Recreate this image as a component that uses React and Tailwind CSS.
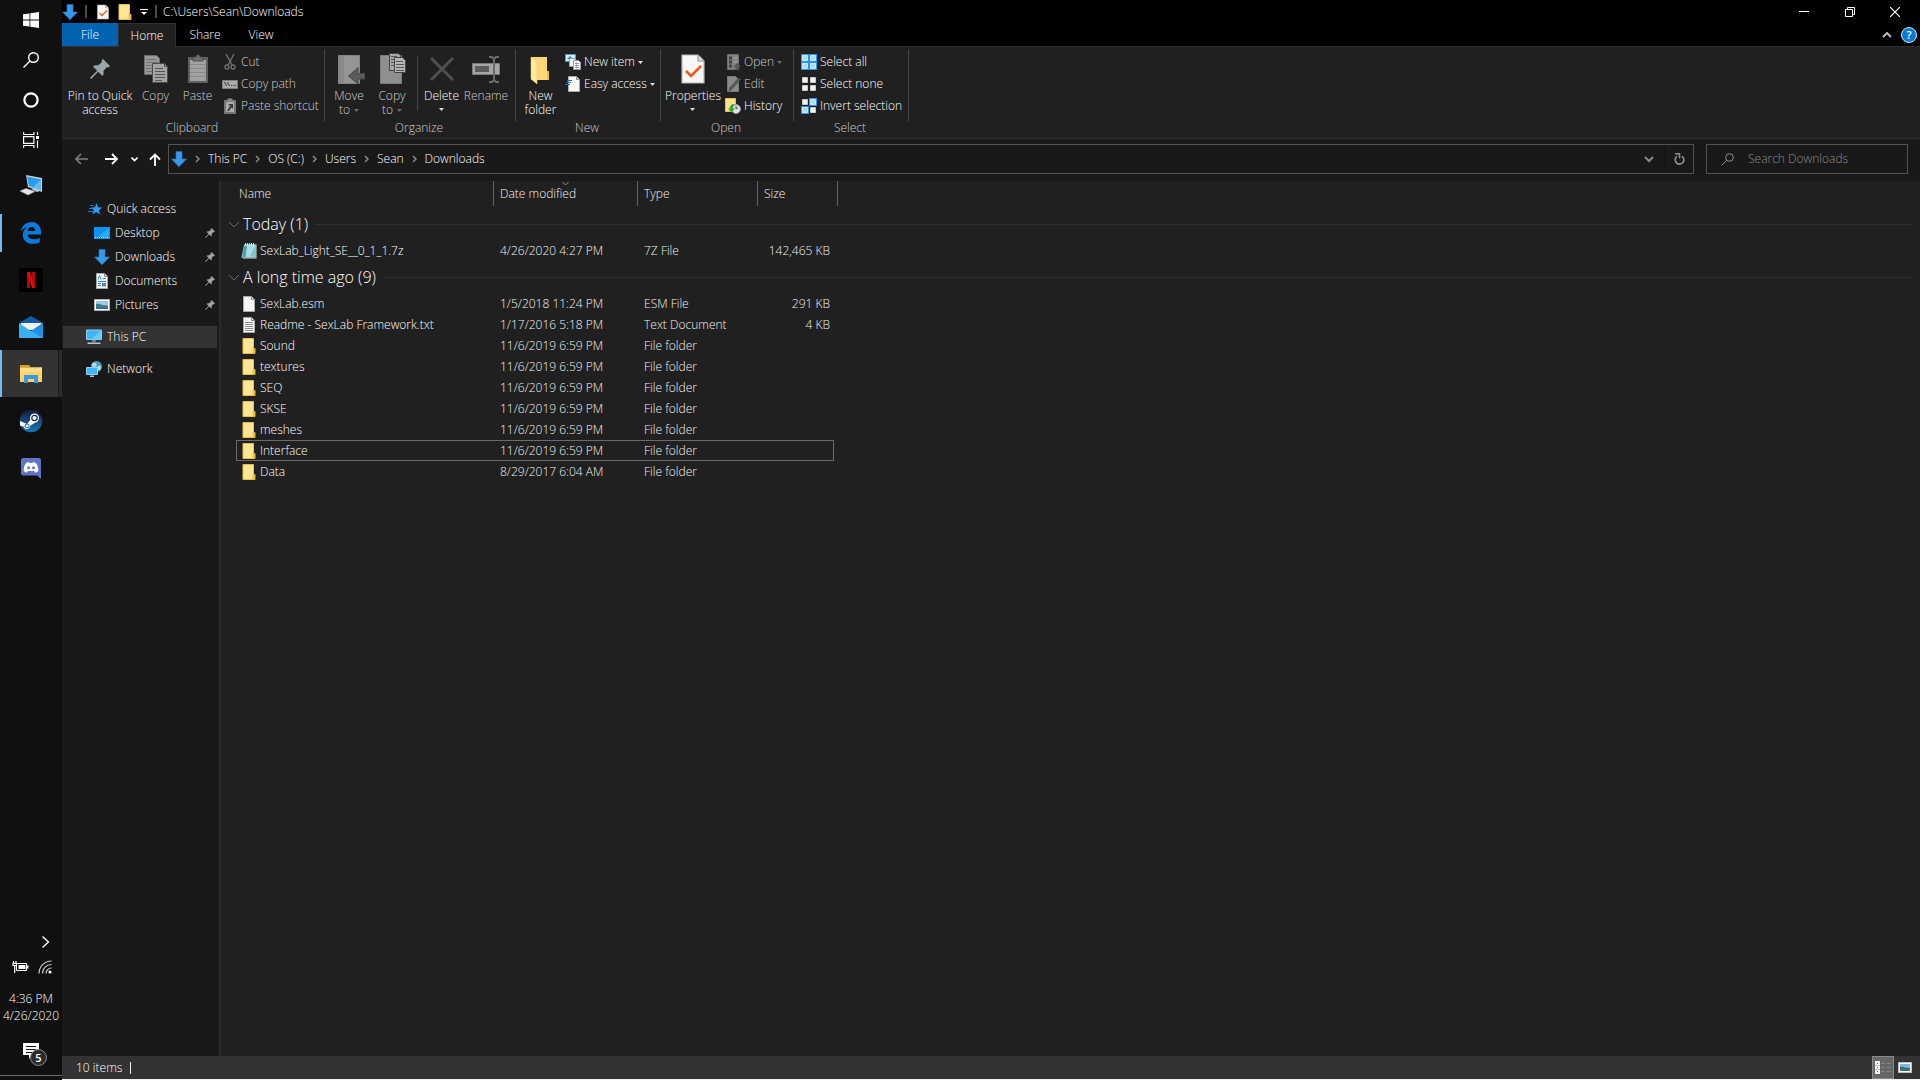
import React from 'react';

const GRAY = '#8f8f8f';

/* ---------- shared icons ---------- */

const Svg = ({ w = 16, h = 16, box, className = '', children }) => (
  <svg width={w} height={h} viewBox={box || `0 0 ${w} ${h}`} className={`shrink-0 ${className}`} fill="none" aria-hidden="true">
    {children}
  </svg>
);

const DownArrowIcon = () => (
  <Svg>
    <path d="M5 0.5h6v7.5h4.5L8 15.8 0.5 8H5z" fill="#3797e8" stroke="#2179c4" strokeWidth="0.6" />
  </Svg>
);

const SmallFolderIcon = () => (
  <Svg>
    <path d="M2 0.5h10.5v10h1.5v5H2z" fill="#ffe594" stroke="#e9bf3e" />
    <path d="M12 10.5h1.5v4.5h-1.5z" fill="#f5cf5c" stroke="#dba81f" strokeWidth="0.6" />
  </Svg>
);

const PropertiesIcon = ({ w = 16, h = 16 }) => (
  <Svg w={w} h={h} box="0 0 32 32">
    <path d="M5 2h16l6 6v22H5z" fill="#f7f7f7" stroke="#b5b5b5" strokeWidth="1.2" />
    <path d="M21 2v6h6" fill="#dcdcdc" stroke="#8f8f8f" />
    <path d="M9 18l5 5 10-10" stroke="#f1581c" strokeWidth="2.6" />
  </Svg>
);

const PushPin = ({ w = 12, h = 12, color = '#9aa4ab' }) => (
  <Svg w={w} h={h} box="0 0 20 20">
    <path d="M13 0l7 7-1.6 1.4-1.4-.4-3.6 4c.5 2 .2 3.600-1 5l-4.200-4.200L1.200 20 0 18.800l7.200-7L3 7.600c1.400-1.200 3-1.500 5-1l4-3.600-.4-1.400z" fill={color} />
  </Svg>
);

const PageIcon = ({ lines }) => (
  <Svg>
    <path d="M2.500 0.500h8l3 3v12h-11z" fill="#f5f5f5" stroke="#a8a8a8" />
    <path d="M10.500 0.500v3h3" fill="#ccc" stroke="#8b8b8b" />
    {lines && <path d="M4 5.500h8M4 7.500h8M4 9.500h8M4 11.500h8M4 13.500h8" stroke="#8c8c8c" />}
  </Svg>
);

const NotepadIcon = () => (
  <Svg>
    <path d="M3 1.500h12.500v14H2z" fill="#e2d5ae" />
    <path d="M3.500 1.500h11.500l-.5 13H.6z" fill="#a5dbe4" stroke="#5d9eab" strokeWidth="0.600" />
    <path d="M6 3l-1.500 11H1.500L3.500 3z" fill="#4d9bab" />
    <path d="M14 3l-.5 10.500H9z" fill="#7cc3d0" />
    <path d="M4.500 0v3M6.500 0v3M8.500 0v3M10.500 0v3M12.500 0v3" stroke="#d8e4e6" />
  </Svg>
);

const MonitorIcon = () => (
  <Svg>
    <path d="M.5 1h15v9.500H.5z" fill="#3fb5f7" stroke="#83d1fb" />
    <path d="M15 1.500V10H5z" fill="#67c8fd" />
    <path d="M6 11.500h4v1H6zM1.500 13.500h13v1.500h-13z" fill="#b9c6ce" />
  </Svg>
);

const Caret = ({ color = '#dedede' }) => (
  <Svg w={5} h={3}>
    <path d="M0 0h5L2.500 3z" fill={color} />
  </Svg>
);

const CrumbChevron = () => (
  <Svg w={5} h={8}>
    <path d="M1 1l3 3-3 3" stroke="#8a8a8a" strokeWidth="1.500" />
  </Svg>
);

/* ---------- ribbon icons ---------- */

const CopyIcon = () => (
  <Svg w={32} h={32}>
    <path d="M4.500 2.500h12l3 3v16h-15z" fill="#989898" stroke="#6c6c6c" />
    <path d="M6 6.500h10M6 9.500h12M6 12.500h12M6 15.500h12M6 18.500h12" stroke="#707070" />
    <path d="M12.500 10.500h12l3 3v16h-15z" fill="#a3a3a3" stroke="#4a4a4a" />
    <path d="M24.500 10.500v3h3" stroke="#4a4a4a" />
    <path d="M15 15.500h8M15 18.500h10M15 21.500h10M15 24.500h10M15 27.500h7" stroke="#555" />
  </Svg>
);

const PasteIcon = () => (
  <Svg w={32} h={32}>
    <path d="M6 4h20v26H6z" fill="#5e5e5e" />
    <path d="M8 7h16v21H8z" fill="#a2a2a2" />
    <path d="M8 11.500h16M8 15.500h16M8 19.500h16M8 23.500h16" stroke="#8b8b8b" />
    <path d="M11 4h3c0-3 4-3 4 0h3v4H11z" fill="#6f6f6f" stroke="#444" strokeWidth="0.800" />
  </Svg>
);

const MoveToIcon = () => (
  <Svg w={32} h={32}>
    <path d="M5.500 2.500h21v28h-21z" fill="#959595" stroke="#848484" />
    <path d="M6 3h5v27H6z" fill="#8a8a8a" />
    <path d="M32 20.500h-7v-6L15.500 23l9.500 8v-5h7z" fill="#5b5b5b" stroke="#484848" />
  </Svg>
);

const CopyToIcon = () => (
  <Svg w={32} h={32}>
    <path d="M4.500 2.500h21v28h-21z" fill="#8f8f8f" stroke="#7d7d7d" />
    <path d="M13.500.5h9l2 2v15h-11z" fill="#a8a8a8" stroke="#444" />
    <path d="M18.500 4.500h8l3 3v12h-11z" fill="#b5b5b5" stroke="#444" />
    <path d="M15 3.500h6M15 6.500h3M15 9.500h3M15 12.500h3M20 8.500h7M20 11.500h8M20 14.500h8M20 17.500h8" stroke="#555" />
  </Svg>
);

const DeleteIcon = () => (
  <Svg w={32} h={32}>
    <path d="M5 5l22 22M27 5L5 27" stroke="#505050" strokeWidth="3" />
  </Svg>
);

const RenameIcon = () => (
  <Svg w={32} h={32}>
    <path d="M2.500 10.500h27v11h-27z" fill="#a6a6a6" stroke="#7a7a7a" />
    <path d="M5 13h14v6H5z" fill="#5c5c5c" />
    <path d="M19 4h3l2 2 2-2h3M24 5.500v22M19 29h3l2-2 2 2h3" stroke="#6b6b6b" strokeWidth="2" />
  </Svg>
);

const NewFolderIcon = () => (
  <Svg w={32} h={32}>
    <path d="M6 4h16v14h2v9H6z" fill="#fbd775" />
    <path d="M6 4l6 4v23l-6-5z" fill="#ffe9a3" stroke="#eec65c" strokeWidth="0.600" />
    <path d="M22 18h2v9h-2z" fill="#eebe4a" />
  </Svg>
);

const CutIcon = () => (
  <Svg>
    <path d="M4 0l6 11M12 0L6 11" stroke="#6f6f6f" strokeWidth="1.400" />
    <circle cx="5" cy="13" r="2" stroke="#6f6f6f" strokeWidth="1.300" />
    <circle cx="11" cy="13" r="2" stroke="#6f6f6f" strokeWidth="1.300" />
  </Svg>
);

const CopyPathIcon = () => (
  <Svg>
    <path d="M.5 4.500h15v8H.5z" fill="#aaa" stroke="#7d7d7d" />
    <path d="M2.500 6l2 4M5.500 6l2 4M9 9.500h1.200M11 9.500h1.200M13 9.500h1.200" stroke="#3c3c3c" />
  </Svg>
);

const PasteShortcutIcon = () => (
  <Svg>
    <path d="M2 2h12v14H2z" fill="#767676" />
    <path d="M4 4h8v10H4z" fill="#ababab" />
    <path d="M5.500.5h5v3h-5z" fill="#8b8b8b" />
    <path d="M6 6h5v5L9.500 9.500 7 13H5l3-5z" fill="#3d3d3d" />
  </Svg>
);

const NewItemIcon = () => (
  <Svg>
    <path d="M.5.5h10v7H.5z" fill="#d5ecfb" stroke="#3f9fe0" />
    <path d="M2 5l3-3 3 3z" fill="#3a7fb0" />
    <path d="M4.500 4.500h6v8h-6z" fill="#f3f3f3" stroke="#9b9b9b" />
    <path d="M8.500 6.500h5l2 2v7h-7z" fill="#fff" stroke="#9b9b9b" />
    <path d="M10 9.500h4M10 11.500h4M10 13.500h4" stroke="#6f9fd0" />
    <path d="M11.500 8v7" stroke="#d98080" strokeWidth="0.600" />
  </Svg>
);

const EasyAccessIcon = () => (
  <Svg>
    <path d="M3.500.5h8l3 3v12h-11z" fill="#f7f7f7" stroke="#a9a9a9" />
    <path d="M11.500.5v3h3" fill="#ccc" stroke="#8b8b8b" />
    <path d="M2 4.500h5M1 6.500h5M0 8.500h5" stroke="#1d6fb8" strokeWidth="1.200" />
  </Svg>
);

const OpenIcon = () => (
  <Svg>
    <path d="M2.500.5h11v15h-11z" fill="#828282" stroke="#6c6c6c" />
    <path d="M4 2.500h3v3H4zM4 6.500h3v3H4zM4 10.500h3v3H4z" fill="#3f3f3f" />
    <path d="M8.500 4h4M8.500 8h4" stroke="#b0b0b0" />
    <path d="M12 9l4 4h-2.500v3h-3v-3H8z" fill="#555" />
  </Svg>
);

const EditIcon = () => (
  <Svg>
    <path d="M2.500.5h8l3 3v12h-11z" fill="#8b8b8b" stroke="#777" />
    <path d="M15.500 3.500L7 13l-3 2 1-3.500L13.500 2z" fill="#5d5d5d" stroke="#3f3f3f" strokeWidth="0.600" />
  </Svg>
);

const HistoryIcon = () => (
  <Svg>
    <path d="M.5.5h10v13H.5z" fill="#fbe08a" stroke="#e8c14a" />
    <circle cx="11" cy="11" r="4.500" fill="#dfe3e6" stroke="#8e979e" />
    <path d="M11 8v3l2-1.500" stroke="#555" />
    <path d="M8.500 6C5 6.500 5 9.500 5 10.500H3l3.500 4L10 10.500H8c0-1.500 0-2.500 1.500-3z" fill="#35a63c" />
  </Svg>
);

const Tile = ({ x, y, on }) => (
  <>
    {on && <path d={`M${x - 1} ${y - 1}h8v8h-8z`} fill="#2f93e6" />}
    <path d={`M${x + 0.5} ${y + 0.5}h5v5h-5z`} fill={on ? '#a8dcff' : '#f2f2f2'} stroke={on ? '#cbeaff' : '#c9c9c9'} />
  </>
);

const TilesIcon = ({ selected }) => (
  <Svg>
    <Tile x={1} y={1} on={selected[0]} />
    <Tile x={9} y={1} on={selected[1]} />
    <Tile x={1} y={9} on={selected[2]} />
    <Tile x={9} y={9} on={selected[3]} />
  </Svg>
);

/* ---------- navigation icons ---------- */

const StarIcon = () => (
  <Svg>
    <path d="M9.500 2l1.500 4.200 4.300.2-3.400 2.700 1.200 4.500-3.800-2.500-3.800 2.500 1.400-4.500L3.800 6.400l4.100-.2z" fill="#2a9df4" />
    <path d="M3 4.500h4M2 7.500h4M1 10.500h5" stroke="#1b76c4" />
  </Svg>
);

const DesktopIcon = () => (
  <Svg>
    <path d="M0 2h16v12H0z" fill="#0c93f5" />
    <path d="M15 3v9H4z" fill="#2ea7ff" />
    <path d="M1 12.500h14" stroke="#cbe8ff" strokeDasharray="1 1" />
  </Svg>
);

const DocumentsIcon = () => (
  <Svg>
    <path d="M2.500.5h8l3 3v12h-11z" fill="#f7f7f7" stroke="#a8a8a8" />
    <path d="M10.500.5v3h3" stroke="#8b8b8b" />
    <path d="M4 6.500l1.500-4 1.500 4M9 5.500h3M4 8.500h8M4 10.500h3M4 12.500h3" stroke="#2b8ad6" />
    <path d="M8 10h4v3.500H8z" fill="#5d87a8" />
  </Svg>
);

const PicturesIcon = () => (
  <Svg>
    <path d="M.5 2.500h15v11H.5z" fill="#fff" stroke="#b5b5b5" />
    <path d="M2 4h12v8H2z" fill="#9cc7ee" />
    <path d="M2 7c4-1 6 2 12 1.500V12H2z" fill="#3f7d7b" />
    <path d="M2 10.500h12V12H2z" fill="#2f6fb0" />
  </Svg>
);

const NetworkIcon = () => (
  <Svg>
    <circle cx="10.500" cy="5.500" r="5.500" fill="#4a9cc4" />
    <path d="M8 1.500c2 0 3 1 2.500 3S7 6 6 5s0-3 2-3.500zM12 5c2-.5 3 .5 3 2s-2 3-3 2-1-3.500 0-4z" fill="#b6dcd9" />
    <path d="M.5 6.500h11v7H.5z" fill="#3fb5f7" stroke="#8bd3fb" />
    <path d="M4 14.500h4v1.500H4z" fill="#b9c6ce" />
  </Svg>
);

/* ---------- taskbar ---------- */

const SYSTEM_ITEMS = [
  {
    label: 'Start',
    icon: (
      <Svg>
        <path d="M0 2.300l6.500-.9v6.100H0zM7.300 1.200L16 0v7.500H7.300zM0 8.400h6.500v6.200L0 13.700zM7.300 8.400H16V16l-8.700-1.200z" fill="#fff" />
      </Svg>
    ),
  },
  {
    label: 'Search',
    icon: (
      <Svg>
        <circle cx="10.500" cy="5.500" r="4.800" stroke="#fff" strokeWidth="1.400" />
        <path d="M7 9L.5 15.500" stroke="#fff" strokeWidth="1.400" />
      </Svg>
    ),
  },
  {
    label: 'Cortana',
    icon: (
      <Svg>
        <circle cx="8" cy="8" r="6.600" stroke="#fff" strokeWidth="2.200" />
      </Svg>
    ),
  },
  {
    label: 'Task View',
    icon: (
      <Svg>
        <path d="M.6 0v2.500h10.300V0M.6 4.600h10.300v6.800H.6zM.6 16v-2.500h10.300V16M14.500 0v3M14.500 8.500V16" stroke="#fff" strokeWidth="1.200" />
        <path d="M13 4h3v3h-3z" fill="#fff" />
      </Svg>
    ),
  },
];

const APP_ITEMS = [
  {
    label: 'This PC',
    icon: (
      <Svg w={24} h={24}>
        <path d="M7 1l16 3v14L9 13z" fill="#c6d4dc" />
        <path d="M8 2.500l14 2.700v11L10 12z" fill="#2a9de8" />
        <path d="M22 5.200v11L14 13.500z" fill="#57bdf8" />
        <path d="M1 17l6-2.500 9 3L9 21z" fill="#dfe5e9" stroke="#9aa7af" strokeWidth="0.600" />
        <path d="M12 15l4-1 6 2.500-4 1.500z" fill="#b9c4cb" />
      </Svg>
    ),
  },
  {
    label: 'Microsoft Edge',
    running: true,
    icon: (
      <Svg w={24} h={24}>
        <path d="M2 10.500C3 4.500 7 1 12.500 1 18.500 1 22 5.500 22 11v2.600H8.600c.2 3.200 2.900 4.700 6.200 4.700 2.300 0 4.200-.6 5.900-1.600v4.600c-2 1-4.300 1.500-7 1.500-6 0-9.900-3.600-9.900-8.800 0-3.300 1.700-6.300 5-7.900-3 .6-5.200 2.200-6.800 4.400zM8.700 10h7.500c0-2.600-1.300-3.900-3.500-3.900-2.200 0-3.700 1.600-4 3.900z" fill="#0a7bdc" />
      </Svg>
    ),
  },
  {
    label: 'Netflix',
    icon: (
      <Svg w={24} h={24}>
        <path d="M0 0h24v24H0z" fill="#000" />
        <path d="M8 4h3v16H8zM13 4h3v16h-3z" fill="#b20710" />
        <path d="M8 4h3l5 16h-3z" fill="#e50914" />
      </Svg>
    ),
  },
  {
    label: 'Mail',
    icon: (
      <Svg w={24} h={24}>
        <path d="M0 8l12-7 12 7v4H0z" fill="#0f5cab" />
        <path d="M2 8h20v7H2z" fill="#f2f6fa" />
        <path d="M0 8l12 8 12-8v15H0z" fill="#38b2ef" />
        <path d="M12 16l12-8v15z" fill="#1f8fe0" />
      </Svg>
    ),
  },
  {
    label: 'File Explorer',
    running: true,
    active: true,
    icon: (
      <Svg w={24} h={24}>
        <path d="M1 3h9l1.500 2H1z" fill="#e59e12" />
        <path d="M1 5.500h22V20H1z" fill="#ffd364" />
        <path d="M1 5.500h22v5H1z" fill="#ffdd83" />
        <path d="M5 13h14v8h-4v-4H9v4H5z" fill="#3b97e3" />
      </Svg>
    ),
  },
  {
    label: 'Steam',
    icon: (
      <Svg w={24} h={24}>
        <defs>
          <linearGradient id="steam" x1="0" y1="0" x2="0" y2="1">
            <stop offset="0" stopColor="#16193a" />
            <stop offset="1" stopColor="#1479b8" />
          </linearGradient>
        </defs>
        <circle cx="12" cy="12" r="11.300" fill="url(#steam)" />
        <path d="M1 12l7 3 5-6 4 4-6 4c0 4-6 4-6 1l-4-1.500z" fill="#fff" />
        <circle cx="15.500" cy="9" r="4.500" fill="#fff" />
        <circle cx="15.500" cy="9" r="2.700" stroke="#1a2a50" strokeWidth="1.200" />
        <circle cx="8" cy="17" r="2" stroke="#1a5a90" />
      </Svg>
    ),
  },
  {
    label: 'Discord',
    icon: (
      <Svg w={24} h={24}>
        <path d="M4 2h16c1 0 2 1 2 2v19l-4-3.500H4c-1 0-2-1-2-2V4c0-1 1-2 2-2z" fill="#6373c3" />
        <path d="M6.500 7.500c2-1.500 3-1.500 3.500-1.500l.5 1h3l.5-1c.5 0 1.500 0 3.500 1.500 1.300 2.500 2 5 1.800 7.500-1.300 1.200-2.500 1.500-3.300 1.500l-1-1.500h-6l-1 1.500c-.8 0-2-.3-3.300-1.500-.2-2.500.5-5 1.800-7.500z" fill="#fff" />
        <circle cx="9.500" cy="11.800" r="1.500" fill="#6373c3" />
        <circle cx="14.500" cy="11.800" r="1.500" fill="#6373c3" />
      </Svg>
    ),
  },
];

const appItemClass = (item) => {
  if (item.active) return 'border-l-2 border-[#76b9ed] bg-[#333333] pr-[2px]';
  return 'pr-0';
};

const Taskbar = () => (
  <aside className="flex w-[62px] shrink-0 flex-col bg-[#101010] text-white">
    {SYSTEM_ITEMS.map((item) => (
      <button key={item.label} aria-label={item.label} className="flex h-10 items-center justify-center">
        {item.icon}
      </button>
    ))}
    <div className="mt-[2px] flex flex-col">
      {APP_ITEMS.map((item) => (
        <button
          key={item.label}
          aria-label={item.label}
          className={`relative flex h-[47px] items-center justify-center ${appItemClass(item)}`}
        >
          {item.running && !item.active && <span className="absolute left-0 h-[38px] w-[2px] bg-[#76b9ed]" />}
          {item.icon}
          {item.active && <span className="absolute inset-y-0 right-0 w-1 border-l border-[#1b1b1b] bg-[#2b2b2b]" />}
        </button>
      ))}
    </div>

    <div className="mt-auto flex flex-col border-b border-[#6b6b6b]">
      <button aria-label="Show hidden icons" className="flex h-6 items-center justify-end pr-3">
        <Svg w={9} h={14}>
          <path d="M1.500 1.500L7.500 7l-6 5.500" stroke="#fff" strokeWidth="1.300" />
        </Svg>
      </button>
      <div className="flex h-[26px] items-center justify-between pr-[10px] pl-3">
        <Svg w={17} h={14}>
          <path d="M4.500 3.500h10v7h-10z" stroke="#fff" />
          <path d="M6.500 5h7v4h-7zM15 5.500h1.500v3H15z" fill="#fff" />
          <path d="M1.500 1v2M4 1v2M1 3.500h3.500v2H1zM2.700 6v7" stroke="#fff" strokeWidth="1.200" />
        </Svg>
        <Svg w={14} h={14}>
          <path d="M1 13.500A12.500 12.500 0 0 1 13.500 1M4.500 13.500a9 9 0 0 1 9-9M8 13.500a5.500 5.500 0 0 1 5.500-5.500" stroke="#d0d0d0" strokeWidth="1.200" />
          <circle cx="12" cy="12" r="1.600" fill="#fff" />
        </Svg>
      </div>
      <time className="mt-[10px] text-center text-[12px] leading-[17px]">
        4:36 PM
        <br />
        4/26/2020
      </time>
      <button aria-label="Notifications" className="relative mt-[19px] flex h-[32px] items-start pl-[23px]">
        <Svg w={16} h={16}>
          <path d="M0 0h16v12H9l-3 4v-4H0z" fill="#fff" />
          <path d="M3 3.500h10M3 6.500h10M3 9.500h7" stroke="#101010" />
        </Svg>
        <span className="absolute top-[6px] left-[30px] flex h-[17px] w-[17px] items-center justify-center rounded-full border border-[#8a8a8a] bg-[#2b2b2b] text-[11px] leading-none font-semibold">
          5
        </span>
      </button>
    </div>
    <div className="h-1" />
  </aside>
);

/* ---------- window chrome ---------- */

const TitleBar = () => (
  <header className="flex h-[23px] items-center bg-black">
    <div className="flex items-center">
      <DownArrowIcon />
      <span className="ml-[7px] h-[13px] w-[2px] bg-[#4a4a4a]" />
      <button aria-label="Properties" className="ml-2">
        <PropertiesIcon />
      </button>
      <button aria-label="New folder" className="ml-[6px]">
        <SmallFolderIcon />
      </button>
      <button aria-label="Customize Quick Access Toolbar" className="ml-[7px]">
        <Svg w={8} h={8}>
          <path d="M0 1.500h8" stroke="#fff" />
          <path d="M1 4h6L4 7z" fill="#fff" />
        </Svg>
      </button>
      <span className="ml-[7px] h-[13px] w-[2px] bg-[#4a4a4a]" />
    </div>
    <h1 className="ml-[6px] text-[12px] text-white">C:\Users\Sean\Downloads</h1>
    <div className="ml-auto flex h-full items-center">
      <button aria-label="Minimize" className="flex h-full w-[46px] items-center justify-center">
        <Svg w={10} h={10}>
          <path d="M0 4.500h10" stroke="#fff" />
        </Svg>
      </button>
      <button aria-label="Restore" className="flex h-full w-[45px] items-center justify-center">
        <Svg w={10} h={10}>
          <path d="M.5 2.500h7v7h-7zM2.500 2V.5h7v7H8" stroke="#fff" />
        </Svg>
      </button>
      <button aria-label="Close" className="mr-[2px] flex h-full w-[46px] items-center justify-center">
        <Svg w={10} h={10}>
          <path d="M0 0l10 10M10 0L0 10" stroke="#fff" strokeWidth="1.200" />
        </Svg>
      </button>
    </div>
  </header>
);

const RibbonTabs = () => (
  <nav className="flex h-[23px] items-stretch bg-black text-[12px] text-white">
    <button className="w-14 bg-[#0063b1]">File</button>
    <button className="relative z-10 -mb-px w-[58px] border border-b-0 border-[#2e2e2e] bg-[#202020]">Home</button>
    <button className="w-[58px]">Share</button>
    <button className="w-[54px]">View</button>
    <div className="ml-auto flex items-center gap-[9px] pr-[3px]">
      <button aria-label="Minimize the Ribbon">
        <Svg w={10} h={6}>
          <path d="M1 5l4-4 4 4" stroke="#b9b9b9" strokeWidth="2" />
        </Svg>
      </button>
      <button
        aria-label="Help"
        className="flex h-4 w-4 items-center justify-center rounded-full border border-[#d8e8f5] bg-[#0a78d6] text-[11px] leading-none font-semibold"
      >
        ?
      </button>
    </div>
  </nav>
);

const BigButton = ({ icon, lines, caret, disabled, width }) => (
  <button className={`flex shrink-0 flex-col items-center ${width} ${disabled ? 'text-[#cccccc]' : 'text-white'}`}>
    {icon}
    <span className="mt-1 flex flex-col items-center leading-[14px] whitespace-nowrap">
      {lines.map((line, i) => (
        <span key={line} className="flex items-center gap-1">
          {line}
          {caret === 'inline' && i === lines.length - 1 && <Caret color="#6b6b6b" />}
        </span>
      ))}
      {caret === 'below' && (
        <span className="flex h-3 items-center">
          <Caret />
        </span>
      )}
    </span>
  </button>
);

const SmallButton = ({ icon, label, caret, disabled }) => (
  <button className={`flex h-[22px] items-center gap-[3px] whitespace-nowrap ${disabled ? 'text-[#cccccc]' : 'text-white'}`}>
    {icon}
    {label}
    {caret && <Caret color={disabled ? '#6b6b6b' : undefined} />}
  </button>
);

const RibbonGroup = ({ title, width, children }) => (
  <section className={`flex shrink-0 ${width}`}>
    <div className="flex min-w-0 flex-1 flex-col">
      <div className="flex h-[72px] items-start pt-[6px]">{children}</div>
      <h2 className="pr-[2px] text-center leading-[22px] text-[#cccccc]">{title}</h2>
    </div>
    <span className="mt-[2px] h-[72px] w-px bg-[#454545]" />
  </section>
);

const SmallColumn = ({ children }) => <div className="-mt-[2px] flex flex-col">{children}</div>;

const Ribbon = () => (
  <div className="flex h-[93px] border-y border-[#2e2e2e] bg-[#202020] text-[12px]">
    <RibbonGroup title="Clipboard" width="w-[263px]">
      <BigButton
        width="w-[76px]"
        icon={
          <span className="flex h-8 items-center">
            <PushPin w={20} h={20} />
          </span>
        }
        lines={['Pin to Quick', 'access']}
      />
      <BigButton width="w-[35px]" icon={<CopyIcon />} lines={['Copy']} disabled />
      <BigButton width="w-[49px]" icon={<PasteIcon />} lines={['Paste']} disabled />
      <SmallColumn>
        <SmallButton icon={<CutIcon />} label="Cut" disabled />
        <SmallButton icon={<CopyPathIcon />} label="Copy path" disabled />
        <SmallButton icon={<PasteShortcutIcon />} label="Paste shortcut" disabled />
      </SmallColumn>
    </RibbonGroup>

    <RibbonGroup title="Organize" width="w-[191px]">
      <BigButton width="w-[48px]" icon={<MoveToIcon />} lines={['Move', 'to']} caret="inline" disabled />
      <BigButton width="w-[38px]" icon={<CopyToIcon />} lines={['Copy', 'to']} caret="inline" disabled />
      <span className="mt-[3px] ml-[6px] h-[55px] w-px bg-[#454545]" />
      <BigButton width="w-[47px]" icon={<DeleteIcon />} lines={['Delete']} caret="below" />
      <BigButton width="w-[42px]" icon={<RenameIcon />} lines={['Rename']} disabled />
    </RibbonGroup>

    <RibbonGroup title="New" width="w-[145px]">
      <BigButton width="w-[49px]" icon={<NewFolderIcon />} lines={['New', 'folder']} />
      <SmallColumn>
        <SmallButton icon={<NewItemIcon />} label="New item" caret />
        <SmallButton icon={<EasyAccessIcon />} label="Easy access" caret />
      </SmallColumn>
    </RibbonGroup>

    <RibbonGroup title="Open" width="w-[133px]">
      <BigButton width="w-[64px]" icon={<PropertiesIcon w={32} h={32} />} lines={['Properties']} caret="below" />
      <SmallColumn>
        <SmallButton icon={<OpenIcon />} label="Open" caret disabled />
        <SmallButton icon={<EditIcon />} label="Edit" disabled />
        <SmallButton icon={<HistoryIcon />} label="History" />
      </SmallColumn>
    </RibbonGroup>

    <RibbonGroup title="Select" width="w-[115px]">
      <div className="pl-[7px]">
        <SmallColumn>
          <SmallButton icon={<TilesIcon selected={[true, true, true, true]} />} label="Select all" />
          <SmallButton icon={<TilesIcon selected={[false, false, false, false]} />} label="Select none" />
          <SmallButton icon={<TilesIcon selected={[false, true, true, false]} />} label="Invert selection" />
        </SmallColumn>
      </div>
    </RibbonGroup>
  </div>
);

const CRUMBS = ['This PC', 'OS (C:)', 'Users', 'Sean', 'Downloads'];

const AddressBar = () => (
  <div className="flex h-[42px] items-center bg-[#191919] pr-3 pb-[2px] text-[12px]">
    <div className="flex w-[106px] shrink-0 items-center pl-[13px]">
      <button aria-label="Back">
        <Svg w={13} h={12}>
          <path d="M13 6H1.500M6 1L1 6l5 5" stroke="#7d7d7d" strokeWidth="1.600" />
        </Svg>
      </button>
      <button aria-label="Forward" className="ml-[17px]">
        <Svg w={13} h={12}>
          <path d="M0 6h11.500M7 1l5 5-5 5" stroke="#fff" strokeWidth="1.800" />
        </Svg>
      </button>
      <button aria-label="Recent locations" className="ml-[13px]">
        <Svg w={7} h={5}>
          <path d="M.5.5l3 3 3-3" stroke="#fff" strokeWidth="1.600" />
        </Svg>
      </button>
      <button aria-label="Up" className="ml-[11px]">
        <Svg w={12} h={13}>
          <path d="M6 13V1.500M1 6.500l5-5 5 5" stroke="#fff" strokeWidth="1.800" />
        </Svg>
      </button>
    </div>
    <div className="flex h-[30px] min-w-0 flex-1 items-center border border-[#535353] pl-[2px] text-white">
      <DownArrowIcon />
      {CRUMBS.map((crumb) => (
        <React.Fragment key={crumb}>
          <span className="mx-2">
            <CrumbChevron />
          </span>
          <a href="#" className="whitespace-nowrap">
            {crumb}
          </a>
        </React.Fragment>
      ))}
      <button aria-label="Previous locations" className="ml-auto flex h-full w-[30px] items-center justify-center">
        <Svg w={10} h={7}>
          <path d="M1 1l4 4 4-4" stroke="#8a8a8a" strokeWidth="2" />
        </Svg>
      </button>
      <button aria-label="Refresh" className="flex h-full w-[29px] items-center justify-center border-l border-[#141414]">
        <Svg w={11} h={12}>
          <path d="M7.800 3.200A4.300 4.300 0 1 1 3 3.400" stroke={GRAY} strokeWidth="1.600" />
          <path d="M1 .8h4.500v4.500" stroke={GRAY} strokeWidth="1.500" />
        </Svg>
      </button>
    </div>
    <label className="ml-3 flex h-[30px] w-[202px] items-center gap-[14px] border border-[#535353] pl-[14px]">
      <Svg w={13} h={13}>
        <circle cx="8.500" cy="4.500" r="3.800" stroke={GRAY} />
        <path d="M5.800 7.200L.5 12.500" stroke={GRAY} />
      </Svg>
      <input
        type="search"
        aria-label="Search Downloads"
        placeholder="Search Downloads"
        className="w-full min-w-0 bg-transparent outline-none placeholder:text-[#8c8c8c]"
      />
    </label>
  </div>
);

/* ---------- navigation pane ---------- */

const QUICK_LINKS = [
  { name: 'Desktop', icon: <DesktopIcon /> },
  { name: 'Downloads', icon: <DownArrowIcon /> },
  { name: 'Documents', icon: <DocumentsIcon /> },
  { name: 'Pictures', icon: <PicturesIcon /> },
];

const NavPane = () => (
  <nav className="w-[157px] shrink-0 bg-[#191919] pt-4 text-[12px] text-white">
    <a href="#" className="flex h-6 items-center gap-1 pl-[25px]">
      <StarIcon />
      Quick access
    </a>
    {QUICK_LINKS.map((link) => (
      <a key={link.name} href="#" className="flex h-6 items-center gap-[5px] pr-1 pl-8">
        {link.icon}
        <span className="flex-1">{link.name}</span>
        <PushPin w={10} h={10} />
      </a>
    ))}
    <a href="#" className="mt-[9px] mr-[2px] ml-px flex h-[22px] items-center gap-[5px] bg-[#333333] pl-[23px]">
      <MonitorIcon />
      This PC
    </a>
    <a href="#" className="mt-[9px] flex h-6 items-center gap-[5px] pl-6">
      <NetworkIcon />
      Network
    </a>
  </nav>
);

/* ---------- file list ---------- */

const GROUPS = [
  {
    title: 'Today (1)',
    files: [{ name: 'SexLab_Light_SE__0_1_1.7z', date: '4/26/2020 4:27 PM', type: '7Z File', size: '142,465 KB', icon: 'archive' }],
  },
  {
    title: 'A long time ago (9)',
    files: [
      { name: 'SexLab.esm', date: '1/5/2018 11:24 PM', type: 'ESM File', size: '291 KB', icon: 'page' },
      { name: 'Readme - SexLab Framework.txt', date: '1/17/2016 5:18 PM', type: 'Text Document', size: '4 KB', icon: 'text' },
      { name: 'Sound', date: '11/6/2019 6:59 PM', type: 'File folder' },
      { name: 'textures', date: '11/6/2019 6:59 PM', type: 'File folder' },
      { name: 'SEQ', date: '11/6/2019 6:59 PM', type: 'File folder' },
      { name: 'SKSE', date: '11/6/2019 6:59 PM', type: 'File folder' },
      { name: 'meshes', date: '11/6/2019 6:59 PM', type: 'File folder' },
      { name: 'Interface', date: '11/6/2019 6:59 PM', type: 'File folder', focused: true },
      { name: 'Data', date: '8/29/2017 6:04 AM', type: 'File folder' },
    ],
  },
];

const FILE_ICONS = {
  archive: <NotepadIcon />,
  page: <PageIcon />,
  text: <PageIcon lines />,
};

const FileRow = ({ file }) => {
  const cell = file.focused ? 'h-[21px] border-y border-[#6a6a6a] py-0 leading-4' : 'h-[21px] py-0 leading-4';
  return (
    <tr>
      <td className={`${cell} pr-0 text-white ${file.focused ? 'border-l pl-1' : 'pl-[5px]'}`}>
        <span className="flex items-center gap-[3px]">
          {FILE_ICONS[file.icon] || <SmallFolderIcon />}
          {file.name}
        </span>
      </td>
      <td className={`${cell} pr-0 pl-[6px]`}>{file.date}</td>
      <td className={`${cell} pr-0 pl-[6px]`}>{file.type}</td>
      <td className={`${cell} pr-1 pl-0 text-right ${file.focused ? 'border-r' : ''}`}>{file.size}</td>
    </tr>
  );
};

const GroupHeader = ({ title }) => (
  <tr className="h-8">
    <th colSpan={5} scope="rowgroup" className="p-0 font-light">
      <button className="-ml-2 flex w-full items-center text-[16px] leading-5 text-white">
        <Svg w={12} h={7}>
          <path d="M1 1l5 5 5-5" stroke="#6a6a6a" />
        </Svg>
        <span className="ml-[3px] whitespace-nowrap">{title}</span>
        <span className="ml-[7px] h-px flex-1 bg-[#2f2f2f]" />
      </button>
    </th>
  </tr>
);

const HEADER_CELL = 'h-[25px] border-r border-[#636363] p-0 text-left font-light';

const FileList = () => (
  <main className="min-w-0 flex-1 border-l-2 border-[#2b2b2b] bg-[#202020] pl-[15px] text-[12px] text-[#f2f2f2]">
    <table className="w-full table-fixed border-separate border-spacing-0">
      <colgroup>
        <col className="w-[258px]" />
        <col className="w-[144px]" />
        <col className="w-[120px]" />
        <col className="w-[76px]" />
        <col />
      </colgroup>
      <thead>
        <tr>
          <th className={`${HEADER_CELL} pl-[3px]`}>Name</th>
          <th className={`${HEADER_CELL} relative pl-[6px]`}>
            Date modified
            <span className="absolute top-px left-[68px]">
              <Svg w={7} h={4}>
                <path d="M.5 0l3 3 3-3" stroke="#8a8a8a" />
              </Svg>
            </span>
          </th>
          <th className={`${HEADER_CELL} pl-[6px]`}>Type</th>
          <th className={`${HEADER_CELL} border-r-0 pl-[6px]`}>Size</th>
          <th className="p-0">
            <span className="ml-[3px] block h-[25px] w-px bg-[#636363]" />
          </th>
        </tr>
      </thead>
      {GROUPS.map((group, i) => (
        <tbody key={group.title}>
          {i === 0 && (
            <tr className="h-[2px]">
              <td colSpan={5} className="p-0" />
            </tr>
          )}
          <GroupHeader title={group.title} />
          {group.files.map((file) => (
            <FileRow key={file.name} file={file} />
          ))}
        </tbody>
      ))}
    </table>
  </main>
);

const StatusBar = () => (
  <footer className="flex h-6 items-center border-b border-[#f0f0f0] bg-[#333333] pl-[14px] text-[12px] text-white">
    <span>10 items</span>
    <span className="ml-2 h-3 w-px bg-[#f0f0f0]" />
    <div className="ml-auto flex h-full items-center pr-2">
      <button aria-label="Details view" className="flex h-full w-[22px] items-center justify-center border border-[#8a8a8a] bg-[#666666]">
        <Svg w={16} h={13}>
          <path d="M0 0h5v13H0z" fill="#f2f2f2" />
          <path d="M2 2h1v1H2zM2 10h1v1H2z" fill="#a33" />
          <path d="M2 6h1v1H2z" fill="#1d84d8" />
          <path d="M0 4.500h5M0 8.500h5" stroke="#999" strokeWidth="0.600" />
          <path d="M6 2.500h4M12 2.500h4M6 6.500h4M12 6.500h4M6 10.500h4M12 10.500h4" stroke="#868686" />
        </Svg>
      </button>
      <button aria-label="Large thumbnails view" className="ml-1">
        <Svg w={14} h={11}>
          <path d="M.5.5h13v10H.5z" fill="#fff" stroke="#c0c0c0" />
          <path d="M2 2h10v7H2z" fill="#7db4f0" />
          <path d="M2 5c3-1 5 1 10 1v3H2z" fill="#3b7068" />
        </Svg>
      </button>
    </div>
  </footer>
);

export default function App() {
  return (
    <div className="flex min-h-screen bg-[#101010] font-['Open_Sans','Noto_Sans',sans-serif] font-light">
      <Taskbar />
      <div className="flex min-w-0 flex-1 flex-col">
        <TitleBar />
        <RibbonTabs />
        <Ribbon />
        <AddressBar />
        <div className="flex flex-1">
          <NavPane />
          <FileList />
        </div>
        <StatusBar />
      </div>
    </div>
  );
}
